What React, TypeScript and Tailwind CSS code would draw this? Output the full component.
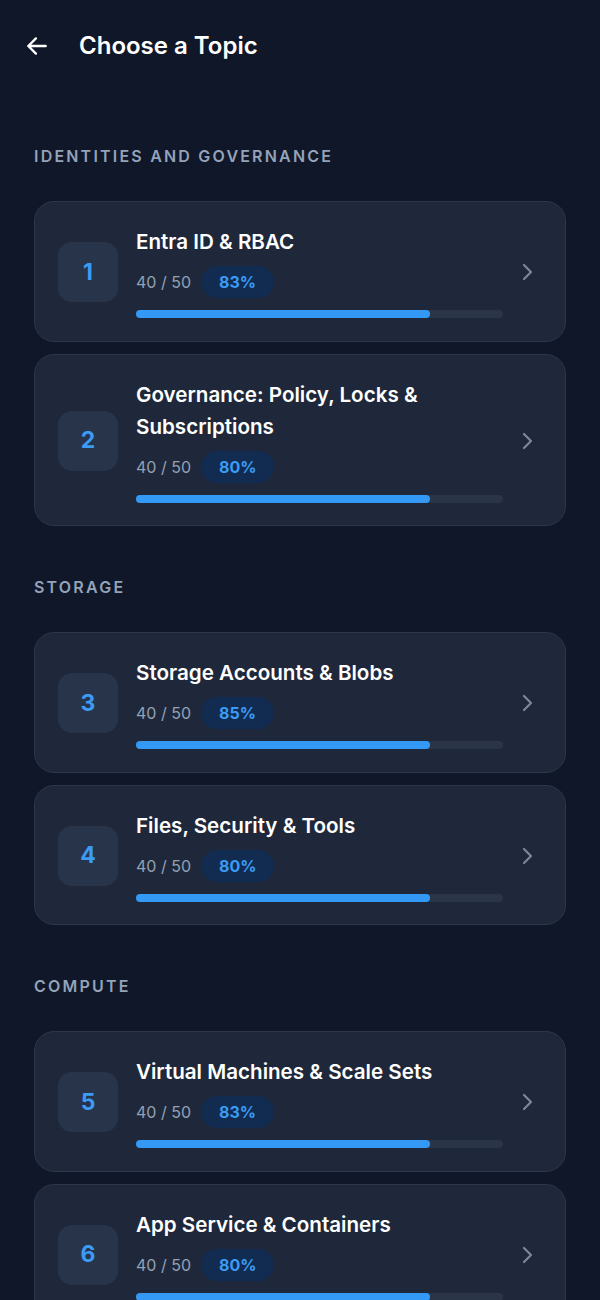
import React from "react";

type Topic = { n: number; title: string; pct: number };

const sections: { label: string; topics: Topic[] }[] = [
  {
    label: "Identities and Governance",
    topics: [
      { n: 1, title: "Entra ID & RBAC", pct: 83 },
      { n: 2, title: "Governance: Policy, Locks & Subscriptions", pct: 80 },
    ],
  },
  {
    label: "Storage",
    topics: [
      { n: 3, title: "Storage Accounts & Blobs", pct: 85 },
      { n: 4, title: "Files, Security & Tools", pct: 80 },
    ],
  },
  {
    label: "Compute",
    topics: [
      { n: 5, title: "Virtual Machines & Scale Sets", pct: 83 },
      { n: 6, title: "App Service & Containers", pct: 80 },
    ],
  },
];

const TopicCard = ({ topic }: { topic: Topic }) => {
  return (
    <div className="flex items-center rounded-[20px] border border-[#2c3749] bg-[#1e283a] pt-6 pb-[22.5px] pl-[23px] pr-[25px]">
      <div className="flex h-[60px] w-[60px] shrink-0 items-center justify-center rounded-[14px] bg-[#28344a] text-[23px] font-bold text-[#3b9bf5]">
        {topic.n}
      </div>
      <div className="ml-[18px] flex-1">
        <div className="text-[20.6px] font-semibold leading-8 text-white">{topic.title}</div>
        <div className="mt-2 flex items-center gap-[10px]">
          <span className="text-[16px] text-[#94a0b4]">40 / 50</span>
          <span className="flex h-8 items-center rounded-full bg-[#112c50] px-[18px] text-[16px] font-bold text-[#3b9bf5]">
            {topic.pct}%
          </span>
        </div>
        <div className="mt-3 h-2 w-full rounded-full bg-[#2a3548]">
          <div className="h-2 w-[80%] rounded-full bg-[#3399f5]" />
        </div>
      </div>
      <div className="ml-[13px] flex w-6 justify-center text-[#7c8799]">
        <svg width="14" height="20" viewBox="0 0 14 20" fill="none">
          <path d="M3 3l7 7-7 7" stroke="currentColor" strokeWidth="2.2" strokeLinecap="round" strokeLinejoin="round" />
        </svg>
      </div>
    </div>
  );
};

const App = () => {
  return (
    <div
      className="min-h-[1300px] bg-[#0f1729] px-[34px]"
      style={{ fontFamily: "Inter, 'Noto Sans', sans-serif" }}
    >
      <header className="flex h-[92px] items-center">
        <svg className="-ml-[10px]" width="26" height="26" viewBox="0 0 24 24" fill="none">
          <path d="M20 12H4M11 5l-7 7 7 7" stroke="white" strokeWidth="2.2" strokeLinecap="round" strokeLinejoin="round" />
        </svg>
        <h1 className="ml-[29px] text-[24px] font-semibold text-white">Choose a Topic</h1>
      </header>
      {sections.map((s, i) => (
        <section key={s.label} className={i === 0 ? "mt-[54px]" : "mt-[51px]"}>
          <div className="text-[16px] font-semibold uppercase leading-5 tracking-[2.2px] text-[#94a3b8]">
            {s.label}
          </div>
          <div className="mt-[35px] flex flex-col gap-3">
            {s.topics.map((t) => (
              <TopicCard key={t.n} topic={t} />
            ))}
          </div>
        </section>
      ))}
    </div>
  );
};

export default App;
